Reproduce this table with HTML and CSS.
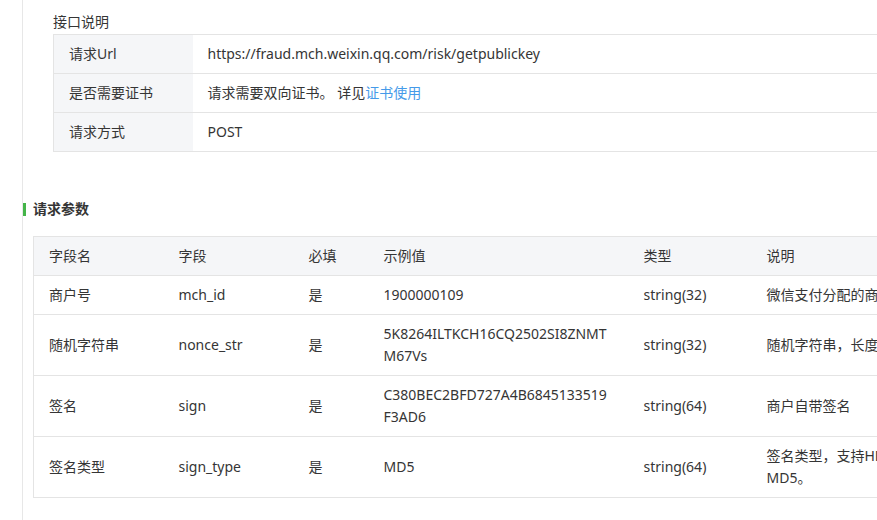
FILE: index.html
```html
<!DOCTYPE html>
<html lang="zh-CN">
<head>
<meta charset="utf-8">
<title>请求参数</title>
<link rel="stylesheet" href="styles.css">
</head>
<body>
<div class="doc">
  <section class="intro">
    <div class="label">接口说明</div>
    <table class="kv">
      <colgroup><col class="kv-key"><col class="kv-val"></colgroup>
      <tr><th>请求Url</th><td>https://fraud.mch.weixin.qq.com/risk/getpublickey</td></tr>
      <tr><th>是否需要证书</th><td>请求需要双向证书。 详见<a class="link" href="#">证书使用</a></td></tr>
      <tr><th>请求方式</th><td>POST</td></tr>
    </table>
  </section>

  <h3 class="title">请求参数</h3>

  <table class="params">
    <colgroup>
      <col class="c-name"><col class="c-field"><col class="c-req"><col class="c-ex"><col class="c-type"><col class="c-desc">
    </colgroup>
    <thead>
      <tr><th>字段名</th><th>字段</th><th>必填</th><th>示例值</th><th>类型</th><th>说明</th></tr>
    </thead>
    <tbody>
      <tr><td>商户号</td><td>mch_id</td><td>是</td><td>1900000109</td><td>string(32)</td><td>微信支付分配的商户号</td></tr>
      <tr><td>随机字符串</td><td>nonce_str</td><td>是</td><td class="wrap">5K8264ILTKCH16CQ2502SI8ZNMTM67Vs</td><td>string(32)</td><td>随机字符串，长度要求在32位以内</td></tr>
      <tr><td>签名</td><td>sign</td><td>是</td><td class="wrap">C380BEC2BFD727A4B6845133519F3AD6</td><td>string(64)</td><td>商户自带签名</td></tr>
      <tr><td>签名类型</td><td>sign_type</td><td>是</td><td>MD5</td><td>string(64)</td><td>签名类型，支持HMAC-SHA256和MD5。</td></tr>
    </tbody>
  </table>
</div>
</body>
</html>
```

FILE: styles.css
```css
html, body {
  margin: 0;
  padding: 0;
  background: #fff;
}
body {
  overflow: hidden;
  font-family: "Noto Sans", "Noto Sans CJK SC", sans-serif;
  font-size: 14px;
  color: #353535;
}
.doc {
  margin-left: 22px;
  border-left: 1px solid #e7e7e7;
  min-height: 520px;
  width: 1100px;
}
.intro {
  padding: 11px 0 0 30px;
}
.label {
  line-height: 22px;
  margin-bottom: 1px;
}
table {
  border-collapse: collapse;
  table-layout: fixed;
}
.kv {
  width: 900px;
  border: 1px solid #e4e4e4;
  border-right: none;
}
.kv-key { width: 139px; }
.kv th, .kv td {
  text-align: left;
  font-weight: normal;
  line-height: 22px;
  padding: 8px 15px;
  border-top: 1px solid #e4e4e4;
  vertical-align: middle;
}
.kv th {
  background: #f5f6f8;
}
.link {
  color: #459ae9;
  text-decoration: none;
}
.title {
  display: flex;
  align-items: center;
  gap: 7px;
  margin: 46px 0 16px 0;
  font-size: 14px;
  font-weight: bold;
  line-height: 22px;
  color: #353535;
}
.title::before {
  content: "";
  width: 3px;
  height: 13px;
  background: #44b549;
}
.params {
  margin-left: 10px;
  width: 964px;
  border: 1px solid #e4e4e4;
  border-right: none;
}
.c-name { width: 130px; }
.c-field { width: 130px; }
.c-req { width: 75px; }
.c-ex { width: 260px; }
.c-type { width: 123px; }
.c-desc { width: 246px; }
.params th, .params td {
  text-align: left;
  font-weight: normal;
  line-height: 22px;
  padding: 8px 16px 8px 15px;
  border-bottom: 1px solid #e4e4e4;
  vertical-align: middle;
}
.params thead th {
  background: #f5f6f8;
}
.wrap {
  word-break: break-all;
}
```
